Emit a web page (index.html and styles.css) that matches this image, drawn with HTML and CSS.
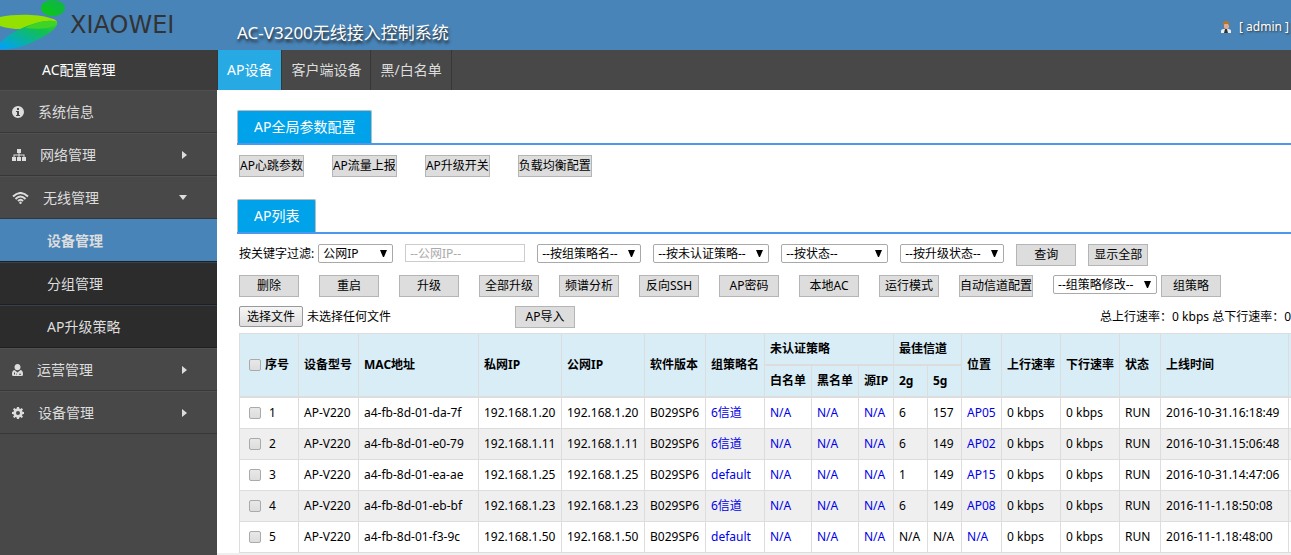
FILE: index.html
```html
<!DOCTYPE html>
<html lang="zh-CN">
<head>
    <meta charset="UTF-8">
    <meta name="viewport" content="width=device-width, initial-scale=1.0">
    <title>AC-V3200无线接入控制系统</title>
    <link rel="stylesheet" href="styles.css">
</head>
<body>
    <header class="header">
        <div class="logo">
            <svg class="logo-mark" viewBox="0 0 66 50" width="66" height="50" aria-hidden="true">
                <defs>
                    <linearGradient id="leaf" x1="1" y1="0" x2="0" y2="1">
                        <stop offset="0" stop-color="#3fd02c"/>
                        <stop offset="0.3" stop-color="#12c04e"/>
                        <stop offset="1" stop-color="#00a0ff"/>
                    </linearGradient>
                    <linearGradient id="ball" x1="1" y1="0" x2="0" y2="1">
                        <stop offset="0" stop-color="#12b054"/>
                        <stop offset="1" stop-color="#06cc0c"/>
                    </linearGradient>
                </defs>
                <ellipse cx="53" cy="8" rx="12" ry="8" fill="url(#ball)"/>
                <path d="M0 17C14 14 38 14 50 18C55 19 58 21 57 24C56 27 48 28 38 29C24 30 8 29 0 26Z" fill="#94e000"/>
                <path d="M57 23C58 28 45 37 31 43C20 48 8 50 0 49V43C8 34 22 27 36 23C46 20 56 20 57 23Z" fill="url(#leaf)"/>
                <path d="M25 28C34 23 45 20 53 21C57 21 58 23 56 25C52 28 38 30 25 28Z" fill="#3fd328"/>
            </svg>
            <span class="logo-name">XIAOWEI</span>
        </div>
        <h1 class="title">AC-V3200无线接入控制系统</h1>
        <div class="user">
            <svg viewBox="0 0 12 12" width="12" height="12" aria-hidden="true">
                <path d="M1 12V10Q1 8 4 8H8Q11 8 11 10V12Z" fill="#e8eef2"/>
                <path d="M5 8H7L8 12H4Z" fill="#333"/>
                <rect x="4" y="2" width="5" height="6" rx="2" fill="#e0a992"/>
                <path d="M3 5V2Q4 0 6 0Q9 0 9 3V5L8 3H4Z" fill="#b87722"/>
            </svg>
            <a href="#" class="user-link">[ admin ]</a>
        </div>
    </header>

    <div class="layout">
        <nav class="sidebar">
            <div class="sidebar-title">AC配置管理</div>
            <ul class="menu">
                <li><a href="#" class="menu-item">
                    <svg viewBox="0 0 12 12" width="12" height="12"><path fill-rule="evenodd" d="M6 0A6 6 0 1 1 6 12A6 6 0 0 1 6 0ZM5 2V4H7V2ZM4 5V6H5V9H4V10H8V9H7V5Z"/></svg>
                    <span>系统信息</span>
                </a></li>
                <li><a href="#" class="menu-item">
                    <svg viewBox="0 0 14 12" width="14" height="12"><path d="M5 0H9V4H7.5V5.5H12.5V8H14V12H10V8H11.5V6.5H7.5V8H9V12H5V8H6.5V6.5H2.5V8H4V12H0V8H1.5V5.5H6.5V4H5Z"/></svg>
                    <span>网络管理</span>
                    <i class="caret-right"></i>
                </a></li>
                <li><a href="#" class="menu-item">
                    <svg viewBox="0 0 17 12" width="17" height="12"><g class="waves"><path d="M1 4.5Q8.5 -2.5 16 4.5"/><path d="M3.5 7Q8.5 2 13.5 7"/><path d="M6 9Q8.5 6.5 11 9"/></g><circle cx="8.5" cy="10.8" r="1.2"/></svg>
                    <span>无线管理</span>
                    <i class="caret-down"></i>
                </a>
                    <ul class="submenu">
                        <li><a href="#" class="submenu-item active">设备管理</a></li>
                        <li><a href="#" class="submenu-item">分组管理</a></li>
                        <li><a href="#" class="submenu-item">AP升级策略</a></li>
                    </ul>
                </li>
                <li><a href="#" class="menu-item">
                    <svg viewBox="0 0 11 12" width="11" height="12"><path fill-rule="evenodd" d="M5.5 0C7.5 0 8.5 1.4 8.5 3.2C8.5 5 7.2 6.3 5.5 6.3C3.8 6.3 2.5 5 2.5 3.2C2.5 1.4 3.5 0 5.5 0ZM2.5 6L5.5 8.5L8.5 6C10.5 6.5 11 8 11 10.5Q11 12 9.5 12H1.5Q0 12 0 10.5C0 8 .5 6.5 2.5 6ZM2 8.5V10.5H3V8.5ZM7 9.5V11H9V9.5H8.5V10.4H7.5V9.5ZM4.5 9.5V11H5V9.5Z"/></svg>
                    <span>运营管理</span>
                    <i class="caret-right"></i>
                </a></li>
                <li><a href="#" class="menu-item">
                    <svg viewBox="0 0 12 12" width="12" height="12"><path fill-rule="evenodd" d="M5 0H7L7.3 1.6L8.4 2.1L9.7 1.1L11 2.4L10 3.7L10.4 4.7L12 5V7L10.4 7.3L10 8.4L11 9.7L9.7 11L8.4 10L7.3 10.4L7 12H5L4.7 10.4L3.6 10L2.3 11L1 9.7L2 8.4L1.6 7.3L0 7V5L1.6 4.7L2 3.6L1 2.3L2.3 1L3.6 2L4.7 1.6ZM6 4A2 2 0 1 0 6 8A2 2 0 0 0 6 4Z"/></svg>
                    <span>设备管理</span>
                    <i class="caret-right"></i>
                </a></li>
            </ul>
        </nav>

        <main class="main">
            <nav class="tabs">
                <a href="#" class="tab current">AP设备</a>
                <a href="#" class="tab">客户端设备</a>
                <a href="#" class="tab">黑/白名单</a>
            </nav>

            <div class="content">
                <section class="section">
                    <div class="section-head"><h2 class="section-title">AP全局参数配置</h2></div>
                    <div class="row params">
                        <button type="button" class="btn">AP心跳参数</button>
                        <button type="button" class="btn">AP流量上报</button>
                        <button type="button" class="btn">AP升级开关</button>
                        <button type="button" class="btn">负载均衡配置</button>
                    </div>
                </section>

                <section class="section">
                    <div class="section-head"><h2 class="section-title">AP列表</h2></div>
                    <div class="toolbar">
                        <div class="row filters">
                            <div class="field">
                                <label for="key">按关键字过滤:</label>
                                <select id="key" class="select small"><option>公网IP</option></select>
                            </div>
                            <input type="text" class="text-input" placeholder="--公网IP--" aria-label="公网IP">
                            <select class="select" aria-label="组策略名"><option>--按组策略名--</option></select>
                            <select class="select wide" aria-label="未认证策略"><option>--按未认证策略--</option></select>
                            <select class="select medium" aria-label="状态"><option>--按状态--</option></select>
                            <select class="select" aria-label="升级状态"><option>--按升级状态--</option></select>
                            <button type="button" class="btn">查询</button>
                            <button type="button" class="btn">显示全部</button>
                        </div>
                        <div class="row actions">
                            <button type="button" class="btn">删除</button>
                            <button type="button" class="btn">重启</button>
                            <button type="button" class="btn">升级</button>
                            <button type="button" class="btn">全部升级</button>
                            <button type="button" class="btn">频谱分析</button>
                            <button type="button" class="btn">反向SSH</button>
                            <button type="button" class="btn">AP密码</button>
                            <button type="button" class="btn">本地AC</button>
                            <button type="button" class="btn">运行模式</button>
                            <button type="button" class="btn">自动信道配置</button>
                            <div class="field">
                                <select class="select" aria-label="组策略修改"><option>--组策略修改--</option></select>
                                <button type="button" class="btn">组策略</button>
                            </div>
                        </div>
                        <div class="row">
                            <div class="file">
                                <input type="file" id="apfile" class="file-input">
                                <label for="apfile" class="file-btn">选择文件</label>
                                <span>未选择任何文件</span>
                            </div>
                            <button type="button" class="btn">AP导入</button>
                            <div class="total">总上行速率：0 kbps 总下行速率：0</div>
                        </div>
                    </div>

                    <table class="ap-table">
                        <colgroup>
                            <col class="w-no"><col class="w-model"><col class="w-mac"><col class="w-ip"><col class="w-ip">
                            <col class="w-ver"><col class="w-rate"><col class="w-list"><col class="w-list"><col class="w-src">
                            <col class="w-ch"><col class="w-ch"><col class="w-pos"><col class="w-rate"><col class="w-rate">
                            <col class="w-state"><col class="w-time"><col class="w-rate">
                        </colgroup>
                        <thead>
                            <tr>
                                <th rowspan="2" class="no"><input type="checkbox" id="all" class="check"><label for="all">序号</label></th>
                                <th rowspan="2">设备型号</th>
                                <th rowspan="2">MAC地址</th>
                                <th rowspan="2">私网IP</th>
                                <th rowspan="2">公网IP</th>
                                <th rowspan="2">软件版本</th>
                                <th rowspan="2">组策略名</th>
                                <th colspan="3">未认证策略</th>
                                <th colspan="2">最佳信道</th>
                                <th rowspan="2">位置</th>
                                <th rowspan="2">上行速率</th>
                                <th rowspan="2">下行速率</th>
                                <th rowspan="2">状态</th>
                                <th rowspan="2">上线时间</th>
                                <th rowspan="2"></th>
                            </tr>
                            <tr>
                                <th>白名单</th><th>黑名单</th><th>源IP</th><th>2g</th><th>5g</th>
                            </tr>
                        </thead>
                        <tbody>
                            <tr>
                                <td class="no"><input type="checkbox" id="ap1" class="check"><label for="ap1">1</label></td>
                                <td>AP-V220</td><td>a4-fb-8d-01-da-7f</td><td>192.168.1.20</td><td>192.168.1.20</td><td>B029SP6</td>
                                <td><a href="#">6信道</a></td><td><a href="#">N/A</a></td><td><a href="#">N/A</a></td><td><a href="#">N/A</a></td>
                                <td>6</td><td>157</td><td><a href="#">AP05</a></td><td>0 kbps</td><td>0 kbps</td><td>RUN</td><td>2016-10-31.16:18:49</td><td></td>
                            </tr>
                            <tr>
                                <td class="no"><input type="checkbox" id="ap2" class="check"><label for="ap2">2</label></td>
                                <td>AP-V220</td><td>a4-fb-8d-01-e0-79</td><td>192.168.1.11</td><td>192.168.1.11</td><td>B029SP6</td>
                                <td><a href="#">6信道</a></td><td><a href="#">N/A</a></td><td><a href="#">N/A</a></td><td><a href="#">N/A</a></td>
                                <td>6</td><td>149</td><td><a href="#">AP02</a></td><td>0 kbps</td><td>0 kbps</td><td>RUN</td><td>2016-10-31.15:06:48</td><td></td>
                            </tr>
                            <tr>
                                <td class="no"><input type="checkbox" id="ap3" class="check"><label for="ap3">3</label></td>
                                <td>AP-V220</td><td>a4-fb-8d-01-ea-ae</td><td>192.168.1.25</td><td>192.168.1.25</td><td>B029SP6</td>
                                <td><a href="#">default</a></td><td><a href="#">N/A</a></td><td><a href="#">N/A</a></td><td><a href="#">N/A</a></td>
                                <td>1</td><td>149</td><td><a href="#">AP15</a></td><td>0 kbps</td><td>0 kbps</td><td>RUN</td><td>2016-10-31.14:47:06</td><td></td>
                            </tr>
                            <tr>
                                <td class="no"><input type="checkbox" id="ap4" class="check"><label for="ap4">4</label></td>
                                <td>AP-V220</td><td>a4-fb-8d-01-eb-bf</td><td>192.168.1.23</td><td>192.168.1.23</td><td>B029SP6</td>
                                <td><a href="#">6信道</a></td><td><a href="#">N/A</a></td><td><a href="#">N/A</a></td><td><a href="#">N/A</a></td>
                                <td>6</td><td>149</td><td><a href="#">AP08</a></td><td>0 kbps</td><td>0 kbps</td><td>RUN</td><td>2016-11-1.18:50:08</td><td></td>
                            </tr>
                            <tr>
                                <td class="no"><input type="checkbox" id="ap5" class="check"><label for="ap5">5</label></td>
                                <td>AP-V220</td><td>a4-fb-8d-01-f3-9c</td><td>192.168.1.50</td><td>192.168.1.50</td><td>B029SP6</td>
                                <td><a href="#">default</a></td><td><a href="#">N/A</a></td><td><a href="#">N/A</a></td><td><a href="#">N/A</a></td>
                                <td>N/A</td><td>N/A</td><td><a href="#">N/A</a></td><td>0 kbps</td><td>0 kbps</td><td>RUN</td><td>2016-11-1.18:48:00</td><td></td>
                            </tr>
                        </tbody>
                    </table>
                </section>
            </div>
        </main>
    </div>
</body>
</html>
```
FILE: styles.css
```css
* {
    box-sizing: border-box;
}

body {
    margin: 0;
    min-height: 100vh;
    display: flex;
    flex-direction: column;
    overflow: hidden;
    background: #efefef;
    color: #000;
    font-family: "Noto Sans", "Noto Sans CJK SC", sans-serif;
    font-size: 12px;
    line-height: 14px;
}

ul {
    list-style: none;
    margin: 0;
    padding: 0;
}

a {
    color: #0000e6;
    text-decoration: none;
}

button, input, select {
    font-family: inherit;
    font-size: 12px;
    color: #000;
    margin: 0;
}

/* header */
.header {
    display: flex;
    height: 50px;
    background: #4884b8;
    color: #fff;
}

.logo {
    display: flex;
    width: 237px;
    gap: 4px;
    align-items: center;
}

.logo-name {
    color: #333;
    font-family: "DejaVu Sans", sans-serif;
    font-size: 24px;
    line-height: 50px;
}

.title {
    margin: 0;
    padding-top: 16px;
    font-size: 17px;
    font-weight: normal;
    line-height: 34px;
    text-shadow: 1px 3px 3px #222;
}

.user {
    display: flex;
    align-items: center;
    gap: 7px;
    margin-left: auto;
    padding: 4px 2px 0 0;
}

.user-link {
    color: #fff;
    text-shadow: 1px 1px 2px #333;
}

/* sidebar */
.layout {
    display: flex;
    flex: 1;
}

.sidebar {
    flex: 0 0 217px;
    background: #484848;
    font-size: 14px;
}

.sidebar-title {
    padding-left: 42px;
    background: #3c3c3c;
    color: #fff;
    line-height: 40px;
}

.menu-item {
    display: flex;
    align-items: center;
    gap: 14px;
    height: 43px;
    padding: 0 30px 0 12px;
    border-top: 1px solid #505050;
    border-bottom: 1px solid #373737;
    color: #ddd;
}

.menu-item svg {
    fill: #ddd;
}

.menu-item .waves {
    fill: none;
    stroke: #ddd;
    stroke-width: 2;
}

.caret-right {
    margin-left: auto;
    border: 4px solid transparent;
    border-left: 5px solid #ddd;
    border-right: 0;
}

.caret-down {
    margin-left: auto;
    border: 4px solid transparent;
    border-top: 5px solid #ddd;
    border-bottom: 0;
}

.submenu-item {
    display: block;
    height: 43px;
    padding-left: 47px;
    background: #2c2c2c;
    border-top: 1px solid #37414b;
    border-bottom: 1px solid #1f1f1f;
    color: #ddd;
    line-height: 41px;
}

.submenu-item.active {
    background: #4884b8;
    border-top-color: #4884b8;
    font-weight: bold;
}

/* main area */
.main {
    flex: 1;
    min-width: 0;
    overflow: hidden;
}

.tabs {
    display: flex;
    background: #484848;
    border-left: 1px solid #373737;
    font-size: 14px;
}

.tab {
    padding: 0 9px;
    border-right: 1px solid #373737;
    color: #ddd;
    line-height: 40px;
}

.tab.current {
    background: #27a9e3;
    color: #fff;
}

.content {
    padding: 20px 0 0 20px;
    background: #fff;
}

.section + .section {
    margin-top: 22px;
}

.section-head {
    display: flex;
    border-bottom: 2px solid #4c98ef;
}

.section-title {
    margin: 0;
    padding: 0 16px;
    background: #00a2e9;
    border: 1px solid #bbb;
    border-bottom: 0;
    border-radius: 2px 2px 0 0;
    color: #fff;
    font-size: 14px;
    font-weight: normal;
    line-height: 32px;
}

.row {
    display: flex;
    height: 22px;
    white-space: nowrap;
}

.params {
    gap: 28px;
    margin: 10px 0 0 2px;
}

.toolbar {
    display: flex;
    flex-direction: column;
    gap: 9px;
    padding: 10px 0 5px 2px;
}

.filters {
    gap: 12px;
}

.actions {
    gap: 20px;
}

.btn {
    flex-shrink: 0;
    min-width: 60px;
    height: 22px;
    padding: 0;
    background: #ddd;
    border: 1px solid #b5b5b5;
    line-height: 20px;
}

.field {
    display: flex;
    gap: 4px;
    line-height: 20px;
}

.select {
    flex-shrink: 0;
    width: 104px;
    height: 19px;
    padding: 0 4px;
    appearance: none;
    border: 1px solid #a9a9a9;
    border-radius: 2px;
    background: #fff url("data:image/svg+xml,%3Csvg xmlns='http://www.w3.org/2000/svg' width='7' height='7'%3E%3Cpath d='M0 0H7L4 7H3Z'/%3E%3C/svg%3E") no-repeat right 5px top 5px;
}

.select.small {
    width: 75px;
}

.select.medium {
    width: 107px;
}

.select.wide {
    width: 116px;
}

.text-input {
    width: 120px;
    height: 18px;
    padding: 0 4px;
    border: 1px solid #ccc;
}

.text-input::placeholder {
    color: #aaa;
}

.file {
    display: flex;
    gap: 4px;
    width: 276px;
    line-height: 22px;
}

.file-input {
    position: absolute;
    width: 1px;
    height: 1px;
    opacity: 0;
}

.file-btn {
    width: 64px;
    height: 21px;
    border: 1px solid #999;
    border-radius: 2px;
    background: linear-gradient(#f6f6f6, #ddd);
    line-height: 19px;
    text-align: center;
}

.total {
    margin-left: auto;
    line-height: 22px;
}

/* ap list */
.ap-table {
    width: 100%;
    margin-left: 2px;
    border-collapse: collapse;
    table-layout: fixed;
    white-space: nowrap;
}

.ap-table th,
.ap-table td {
    padding: 8px 5px;
    border: 1px solid #ddd;
    text-align: left;
}

.ap-table th {
    background: #d9edf7;
    border-bottom-width: 2px;
}

.ap-table tbody tr:nth-child(even) {
    background: #efefef;
}

.ap-table .no {
    padding: 7px 0 7px 9px;
}

.no label {
    display: inline-block;
    vertical-align: middle;
}

.check {
    width: 12px;
    height: 12px;
    appearance: none;
    border: 1px solid #aaa;
    border-radius: 2px;
    background: linear-gradient(#e8e8e8, #ddd);
    vertical-align: middle;
}

th .check {
    margin-right: 4px;
}

td .check {
    margin-right: 8px;
}

.w-no { width: 59px; }
.w-model { width: 60px; }
.w-mac { width: 120px; }
.w-ip { width: 83px; }
.w-ver { width: 61px; }
.w-rate { width: 59px; }
.w-list { width: 47px; }
.w-src { width: 35px; }
.w-ch { width: 34px; }
.w-pos { width: 40px; }
.w-state { width: 41px; }
.w-time { width: 128px; }
```
